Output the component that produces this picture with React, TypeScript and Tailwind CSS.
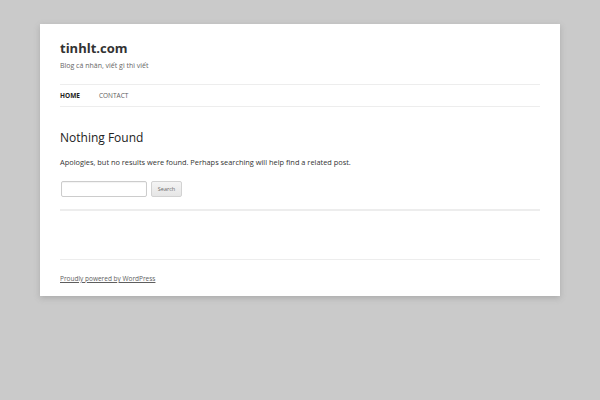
export default function App() {
  return (
    <div className="min-h-[400px] w-[600px] bg-[#cacaca] pt-[24px]" style={{ fontFamily: '"Open Sans", "DejaVu Sans", sans-serif' }}>
      <div className="ml-[40px] w-[520px] bg-white px-[20px] pt-[16px] pb-[12px] shadow-[0_2px_6px_rgba(100,100,100,0.3)]">
        <header>
          <h1 className="text-[13px] font-bold leading-[16px] text-[#333]">tinhlt.com</h1>
          <p className="mt-[5px] text-[7px] leading-[10px] text-[#666]">Blog cá nhân, viết gì thì viết</p>
          <nav className="mt-[13px] flex h-[23px] items-center gap-[19px] border-y border-[#ededed] text-[6.5px] uppercase">
            <span className="font-bold text-[#222]">Home</span>
            <span className="text-[#5e5e5e]">Contact</span>
          </nav>
        </header>
        <main className="pt-[23px]">
          <h2 className="text-[12px] leading-[16px] text-[#222]">Nothing Found</h2>
          <p className="mt-[11px] text-[7.4px] leading-[11px] text-[#333]">
            Apologies, but no results were found. Perhaps searching will help find a related post.
          </p>
          <div className="mt-[13px] flex items-center gap-[4px] pl-[1px]">
            <div className="h-[16px] w-[86px] rounded-[2px] border border-[#ccc] bg-white shadow-[inset_0_1px_1px_rgba(0,0,0,0.05)]" />
            <div className="flex h-[16px] w-[31px] items-center justify-center rounded-[2px] border border-[#d2d2d2] bg-gradient-to-b from-[#f4f4f4] to-[#e6e6e6] text-[5.5px] text-[#6a6a6a]">
              Search
            </div>
          </div>
          <div className="mt-[12px] h-[2px] bg-[#ededed]" />
        </main>
        <footer className="mt-[48px] border-t border-[#ededed] pt-[14px]">
          <p className="text-[6.5px] leading-[10px] text-[#5e5e5e]">
            <span className="underline">Proudly powered by WordPress</span>
          </p>
        </footer>
      </div>
    </div>
  );
}
